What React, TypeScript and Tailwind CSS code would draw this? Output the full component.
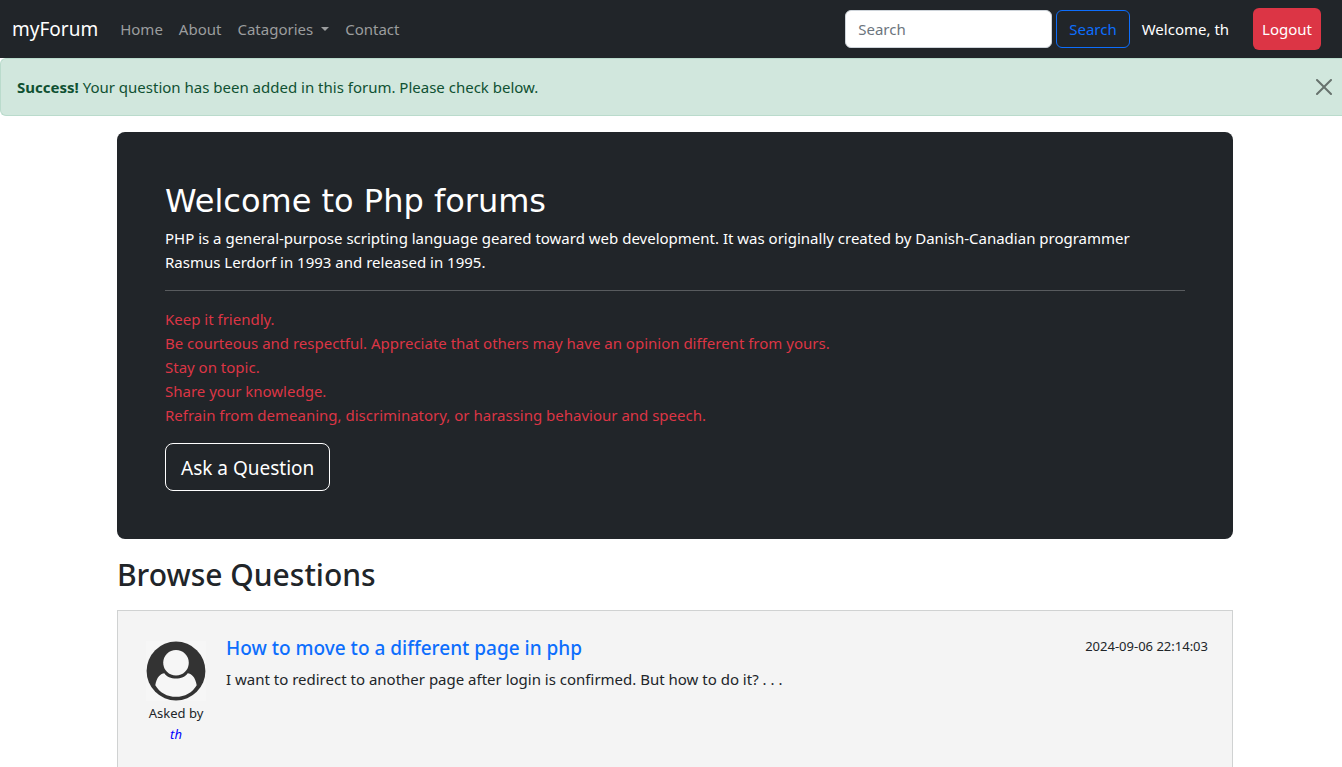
import React from "react";

const navLink = "px-2 py-2 text-[#9b9d9e] hover:text-white";

const rules = [
  "Keep it friendly.",
  "Be courteous and respectful. Appreciate that others may have an opinion different from yours.",
  "Stay on topic.",
  "Share your knowledge.",
  "Refrain from demeaning, discriminatory, or harassing behaviour and speech.",
];

function Avatar() {
  return (
    <svg viewBox="0 0 60 60" className="size-[60px]" aria-hidden="true">
      <rect width="60" height="60" fill="#f6f6f6" />
      <circle cx="30" cy="30" r="29.4" fill="#333" />
      <circle cx="30" cy="21.7" r="12.8" fill="#f6f6f6" />
      <path
        d="M18.3 32.2C20.5 35.6 25 37.6 30 37.6S39.5 35.6 41.700 32.2C45 32.200 49.500 36 50.700 44.200C46.500 51.600 38.700 55.800 30 55.800S13.500 51.600 9.300 44.200C10.500 36 15 32.200 18.300 32.200Z"
        fill="#f6f6f6"
      />
    </svg>
  );
}

function Navbar() {
  return (
    <nav className="flex min-h-[58px] items-center bg-[#212529] pr-[21px] pl-3">
      <a href="#" className="mr-3.5 text-[19px] leading-[30px] text-white">
        myForum
      </a>
      <div className="flex grow items-center">
        <a href="#" className={navLink}>Home</a>
        <a href="#" className={navLink}>About</a>
        <button type="button" className="flex items-center gap-2 px-2 py-2 text-[#9b9d9e] hover:text-white">
          Catagories
          <svg viewBox="0 0 8 4" className="h-1 w-2" aria-hidden="true">
            <path d="M0 0h8L4 4z" fill="currentColor" />
          </svg>
        </button>
        <a href="#" className={navLink}>Contact</a>
      </div>
      <form className="flex items-center gap-1" onSubmit={(e) => e.preventDefault()}>
        <input
          type="search"
          aria-label="Search"
          placeholder="Search"
          className="h-[38px] w-[207px] rounded-md border border-[#ced4da] bg-white px-3 text-[#212529] placeholder:text-[#6c757d]"
        />
        <button type="submit" className="h-[38px] rounded-md border border-[#0d6efd] px-3 text-[#0d6efd]">
          Search
        </button>
      </form>
      <p className="mr-6 ml-3 text-white">Welcome, th</p>
      <a href="#" className="rounded-md bg-[#dc3545] px-[9px] py-[9px] text-white">Logout</a>
    </nav>
  );
}

function Alert() {
  return (
    <div
      role="alert"
      className="flex items-center justify-between rounded-l-md border border-r-0 border-[#badbcc] bg-[#d1e7dd] py-4 pr-2.5 pl-4 text-[#0f5132]"
    >
      <p>
        <strong className="font-bold">Success!</strong> Your question has been added in this forum. Please check below.
      </p>
      <button type="button" aria-label="Close" className="opacity-50">
        <svg viewBox="0 0 16 16" className="size-4" aria-hidden="true">
          <path
            d="M.293.293a1 1 0 011.414 0L8 6.586 14.293.293a1 1 0 111.414 1.414L9.414 8l6.293 6.293a1 1 0 01-1.414 1.414L8 9.414l-6.293 6.293a1 1 0 01-1.414-1.414L6.586 8 .293 1.707a1 1 0 010-1.414z"
            fill="#000"
          />
        </svg>
      </button>
    </div>
  );
}

export default function App() {
  return (
    <div className="overflow-x-hidden bg-white font-['Noto_Sans',sans-serif] text-[15px] leading-6 text-[#212529]">
      <Navbar />
      <Alert />
      <main className="pl-2">
        <div className="mx-auto max-w-[1140px] px-3">
          <section className="mt-4 rounded-lg bg-[#212529] p-12 text-white">
            <h1 className="mb-1 font-['DejaVu_Sans',sans-serif] text-[32px] leading-[42px]">Welcome to Php forums</h1>
            <p>
              PHP is a general-purpose scripting language geared toward web development. It was originally created by
              Danish-Canadian programmer Rasmus Lerdorf in 1993 and released in 1995.
            </p>
            <hr className="my-4 border-[#585b5e]" />
            <ul className="mb-4 text-[#dc3545]">
              {rules.map((rule) => (
                <li key={rule}>{rule}</li>
              ))}
            </ul>
            <button type="button" className="h-12 rounded-lg border border-white px-[15px] pt-px text-[19px]">
              Ask a Question
            </button>
          </section>

          <h2 className="mt-4 mb-4 text-[30px] leading-[39px] font-medium">Browse Questions</h2>

          <article className="flex min-h-[180px] border border-[#d0d2d2] bg-[#f4f4f4] px-6 py-[25px]">
            <div className="mt-[5px] mr-5 ml-1 flex w-[60px] flex-col items-center text-[13px] leading-[21px]">
              <Avatar />
              <p className="mt-0.5 whitespace-nowrap">Asked by</p>
              <p className="text-[#0000ff] italic">th</p>
            </div>
            <div className="grow">
              <h3 className="mb-[7px] text-[19px] leading-6 font-medium">
                <a href="#" className="text-[#0d6efd]">How to move to a different page in php</a>
              </h3>
              <p>I want to redirect to another page after login is confirmed. But how to do it? . . .</p>
            </div>
            <time dateTime="2024-09-06T22:14:03" className="text-[13px] leading-[21px]">
              2024-09-06 22:14:03
            </time>
          </article>
        </div>
      </main>
    </div>
  );
}
